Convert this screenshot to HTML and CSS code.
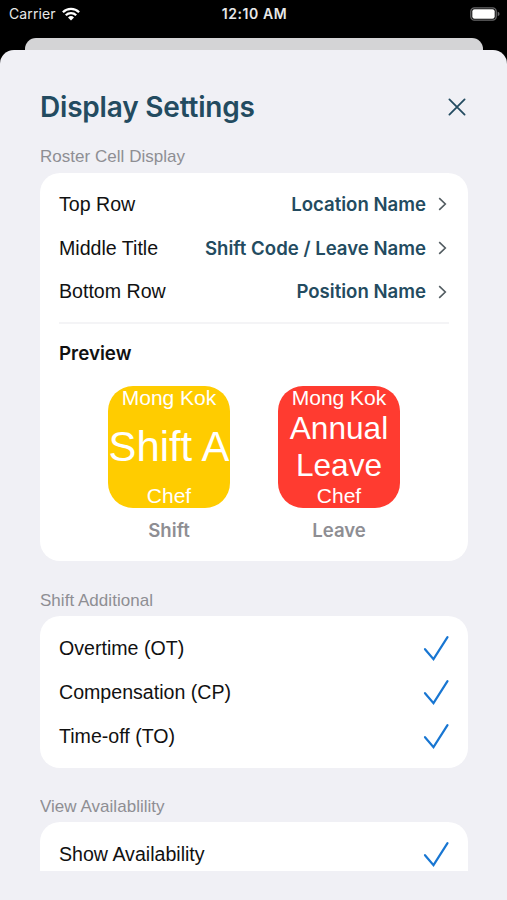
FILE: index.html
```html
<!DOCTYPE html>
<html lang="en">
<head>
<meta charset="utf-8">
<title>Display Settings</title>
<link rel="stylesheet" href="styles.css">
</head>
<body>
<svg class="defs" width="0" height="0" aria-hidden="true">
  <symbol id="chevron" viewBox="0 0 9 14"><path d="M1.2 1.2 7.3 7 1.2 12.8"/></symbol>
  <symbol id="check" viewBox="0 0 28 28"><path d="M3 15.2 11.5 25.2 25.5 3.2"/></symbol>
</svg>
<div class="status">
  <div class="carrier"><span>Carrier</span>
    <svg width="18" height="14" viewBox="0 0 18 14"><g fill="none" stroke="#fff" stroke-width="2.3"><path d="M.9 5.2a11.5 11.5 0 0 1 16.2 0"/><path d="M3.8 8.3a7.4 7.4 0 0 1 10.4 0"/></g><path fill="#fff" d="M6 10.5a4.3 4.3 0 0 1 6 0l-3 3z"/></svg>
  </div>
  <div class="time">12:10 AM</div>
  <div class="power"><svg width="30" height="14" viewBox="0 0 30 14"><rect x=".8" y=".8" width="25.4" height="12.4" rx="3.6" fill="none" stroke="#68686a" stroke-width="1.3"/><rect x="2.3" y="2.2" width="22.4" height="9.6" rx="2.2" fill="#fff"/><path fill="#68686a" d="M27.7 4.8q1.9.6 1.9 2.2t-1.9 2.2z"/></svg></div>
</div>
<div class="behind"></div>
<main class="sheet">
  <header class="head">
    <h1>Display Settings</h1>
    <svg class="close" width="18" height="18" viewBox="0 0 18 18"><path d="M1.4 1.4 16.6 16.6M16.6 1.4 1.4 16.6"/></svg>
  </header>
  <div class="content">
    <h2>Roster Cell Display</h2>
    <section class="card roster">
      <div class="row"><span>Top Row</span><span class="value">Location Name</span><svg class="chevron"><use href="#chevron"/></svg></div>
      <div class="row"><span>Middle Title</span><span class="value">Shift Code / Leave Name</span><svg class="chevron"><use href="#chevron"/></svg></div>
      <div class="row"><span>Bottom Row</span><span class="value">Position Name</span><svg class="chevron"><use href="#chevron"/></svg></div>
      <hr>
      <h3>Preview</h3>
      <div class="previews">
        <figure>
          <div class="tile shift"><span>Mong Kok</span><b>Shift A</b><span>Chef</span></div>
          <figcaption>Shift</figcaption>
        </figure>
        <figure>
          <div class="tile leave"><span>Mong Kok</span><b>Annual<br>Leave</b><span>Chef</span></div>
          <figcaption>Leave</figcaption>
        </figure>
      </div>
    </section>
    <h2>Shift Additional</h2>
    <section class="card extra">
      <div class="row"><span>Overtime (OT)</span><svg class="check"><use href="#check"/></svg></div>
      <div class="row"><span>Compensation (CP)</span><svg class="check"><use href="#check"/></svg></div>
      <div class="row"><span>Time-off (TO)</span><svg class="check"><use href="#check"/></svg></div>
    </section>
    <h2>View Availablility</h2>
    <section class="card extra">
      <div class="row"><span>Show Availability</span><svg class="check"><use href="#check"/></svg></div>
    </section>
  </div>
</main>
</body>
</html>
```
FILE: styles.css
```css
* { box-sizing: border-box; margin: 0; padding: 0; }
body {
  width: 507px;
  height: 900px;
  overflow: hidden;
  background: #000;
  color: #111;
  font-family: "Liberation Sans", Arial, sans-serif;
}
.defs { display: block; }
svg { display: block; flex: none; }

.status {
  display: grid;
  grid-template-columns: 1fr auto 1fr;
  align-items: center;
  height: 38px;
  padding: 0 7px 11px 9px;
  color: #e8e8e8;
  font: 400 14px/16px Inter, sans-serif;
}
.carrier { display: flex; align-items: center; gap: 6px; letter-spacing: .1px; }
.time { font-weight: 600; letter-spacing: .55px; }
.power { justify-self: end; }

.behind { height: 12px; margin: 0 24px 0 25px; border-radius: 11px 11px 0 0; background: #d4d4d6; }
.sheet {
  height: 850px;
  padding: 40px 39px 0 40px;
  border-radius: 14px 14px 0 0;
  background: #f0f0f5;
}
.head { display: flex; align-items: center; justify-content: space-between; height: 34px; padding-right: 2px; }
h1 { color: #234b60; font: 600 28px/34px Inter, sans-serif; letter-spacing: -.2px; white-space: nowrap; }
.close { fill: none; stroke: #234b60; stroke-width: 1.8; stroke-linecap: round; }

.content { height: 747px; overflow: hidden; }
h2 { height: 48.5px; padding-top: 23px; color: #8e8e93; font-size: 17px; font-weight: 400; line-height: 20px; letter-spacing: .03px; }
.card + h2 { height: 55px; padding-top: 30px; }
.card { border-radius: 20px; background: #fff; padding: 10px 19px 0; }
.roster { height: 388.5px; }
.extra { height: 152px; }
.extra + h2 { height: 54px; padding-top: 29px; }
.row { display: flex; align-items: center; height: 43.7px; font-size: 19.6px; }
.extra .row { height: 44px; }
.value { margin-left: auto; color: #234b60; font: 600 18.6px/24px Inter, sans-serif; letter-spacing: 0; }
.roster .value { margin-top: -1px; }
.chevron { width: 9px; height: 14px; margin: 0 2px 0 12px; fill: none; stroke: #515b60; stroke-width: 1.6; }
.check { width: 28px; height: 28px; margin-left: auto; margin-right: -1px; fill: none; stroke: #1876d2; stroke-width: 2.2; stroke-linecap: round; }
hr { height: 2px; border: 0; margin-top: 8.5px; background: #f4f4f6; }
h3 { margin-top: 18px; color: #111; font: 600 18.8px/24px Inter, sans-serif; }
.previews { display: flex; justify-content: center; gap: 48px; margin-top: 20px; }
figure { width: 122px; }
.tile {
  display: flex;
  flex-direction: column;
  justify-content: space-between;
  height: 122px;
  border-radius: 25px;
  overflow: hidden;
  color: #fff;
  text-align: center;
  white-space: nowrap;
}
.tile span { font-size: 21px; line-height: 24px; }
.tile b { font-weight: 400; }
.shift { background: #fc0; }
.leave { background: #ff3b30; }
.shift b { font-size: 41.8px; line-height: 46px; }
.leave b { font-size: 31.6px; line-height: 37px; }
figcaption { margin-top: 10px; color: #8e8e93; font: 600 18.6px/24px Inter, sans-serif; text-align: center; }
```
